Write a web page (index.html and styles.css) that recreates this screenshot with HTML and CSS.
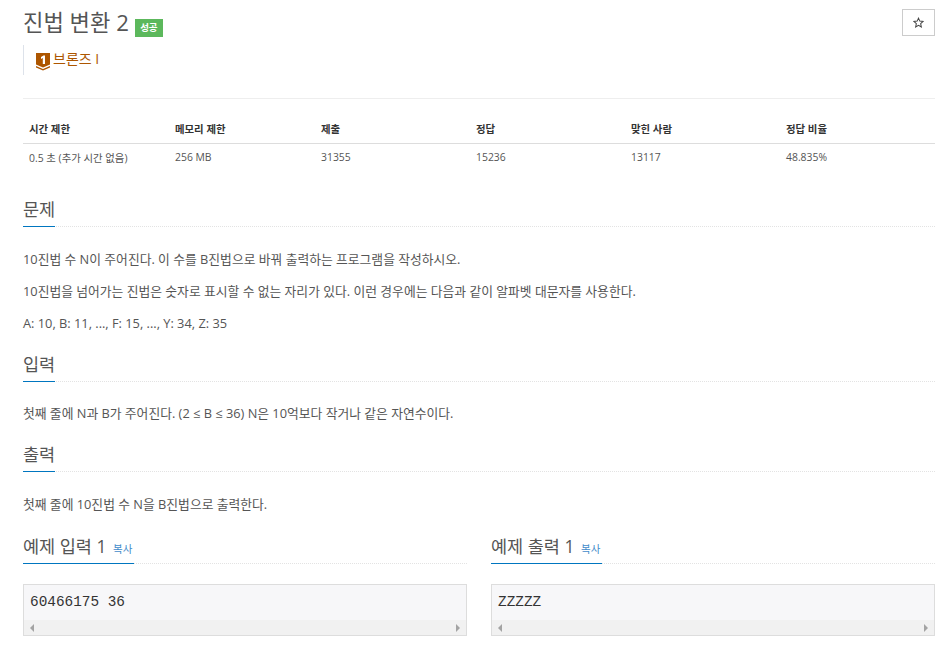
FILE: index.html
```html
<!DOCTYPE html>
<html lang="ko">

<head>
    <meta charset="UTF-8">
    <title>진법 변환 2</title>
    <link rel="stylesheet" href="styles.css">
</head>

<body>
    <div class="page-header">
        <div class="title-row">
            <h1 class="title">진법 변환 2</h1>
            <span class="label-success">성공</span>
        </div>
        <button class="star-btn">
            <svg width="11" height="11" viewBox="0 0 24 24"><path d="M12 2.500l2.900 6.500 7.100.8-5.300 4.800 1.500 7-6.200-3.600-6.200 3.600 1.500-7L2 9.800l7.100-.8z" fill="none" stroke="#444" stroke-width="2.200"/></svg>
        </button>
    </div>

    <div class="tier">
        <svg class="tier-icon" width="14" height="18" viewBox="0 0 14 18">
            <path d="M0 0h14v11.500l-7 3-7-3z" fill="#ad5600"/>
            <path d="M0 13l7 3 7-3v1.500l-7 3-7-3z" fill="#ad5600"/>
            <path d="M5 4l2.500-1.500H9V11H6.800V5L5 6z" fill="#fff"/>
        </svg>
        <span class="tier-name">브론즈 I</span>
    </div>

    <hr class="divider">

    <table class="info-table">
        <thead>
            <tr>
                <th>시간 제한</th>
                <th>메모리 제한</th>
                <th>제출</th>
                <th>정답</th>
                <th>맞힌 사람</th>
                <th>정답 비율</th>
            </tr>
        </thead>
        <tbody>
            <tr>
                <td>0.5 초 (추가 시간 없음)</td>
                <td>256 MB</td>
                <td>31355</td>
                <td>15236</td>
                <td>13117</td>
                <td>48.835%</td>
            </tr>
        </tbody>
    </table>

    <section class="section first">
        <div class="headline"><h2>문제</h2></div>
        <p>10진법 수 N이 주어진다. 이 수를 B진법으로 바꿔 출력하는 프로그램을 작성하시오.</p>
        <p>10진법을 넘어가는 진법은 숫자로 표시할 수 없는 자리가 있다. 이런 경우에는 다음과 같이 알파벳 대문자를 사용한다.</p>
        <p>A: 10, B: 11, ..., F: 15, ..., Y: 34, Z: 35</p>
    </section>

    <section class="section">
        <div class="headline"><h2>입력</h2></div>
        <p>첫째 줄에 N과 B가 주어진다. (2 ≤ B ≤ 36) N은 10억보다 작거나 같은 자연수이다.</p>
    </section>

    <section class="section">
        <div class="headline"><h2>출력</h2></div>
        <p>첫째 줄에 10진법 수 N을 B진법으로 출력한다.</p>
    </section>

    <div class="samples">
        <div class="sample">
            <div class="headline"><h2>예제 입력 1 <a class="copy">복사</a></h2></div>
            <div class="sample-box">
                <pre>60466175 36</pre>
                <div class="scrollbar"><span class="arrow-left"></span><span class="arrow-right"></span></div>
            </div>
        </div>
        <div class="sample">
            <div class="headline"><h2>예제 출력 1 <a class="copy">복사</a></h2></div>
            <div class="sample-box">
                <pre>ZZZZZ</pre>
                <div class="scrollbar"><span class="arrow-left"></span><span class="arrow-right"></span></div>
            </div>
        </div>
    </div>
</body>

</html>
```

FILE: styles.css
```css
* {
    margin: 0;
    padding: 0;
    box-sizing: border-box;
}

body {
    font-family: "Open Sans", "Noto Sans CJK KR", sans-serif;
    color: #555;
    background-color: #fff;
    padding: 0 15px 0 23px;
    overflow: hidden;
}

/* Title */
.page-header {
    display: flex;
    justify-content: space-between;
    padding-top: 9px;
    height: 45px;
}

.title-row {
    display: flex;
    align-items: flex-start;
    gap: 6px;
}

.title {
    font-size: 22.200px;
    font-weight: 400;
    line-height: 28px;
    color: #555;
}

.label-success {
    margin-top: 10px;
    background-color: #5cb85c;
    color: #fff;
    font-size: 9.500px;
    font-weight: 700;
    width: 28px;
    height: 18px;
    line-height: 18px;
    text-align: center;
}

.star-btn {
    width: 33px;
    height: 27px;
    background-color: #fff;
    border: 1px solid #ccc;
    display: flex;
    align-items: center;
    justify-content: center;
}

/* Tier */
.tier {
    height: 30px;
    border-left: 1px solid #dde2ea;
    padding: 8px 0 0 12px;
    display: flex;
    align-items: flex-start;
    gap: 3px;
}

.tier-name {
    color: #ad5600;
    font-size: 14px;
    line-height: 12px;
}

.divider {
    border: 0;
    border-top: 1px solid #eee;
    margin-top: 23px;
}

/* Info table */
.info-table {
    width: 100%;
    border-collapse: collapse;
    table-layout: fixed;
    margin-top: 16px;
    font-size: 10.400px;
}

.info-table th:nth-child(1),
.info-table th:nth-child(2) {
    width: 146px;
}

.info-table th {
    text-align: left;
    font-weight: 700;
    color: #333;
    height: 28px;
    padding: 0 6px;
    border-bottom: 1px solid #ddd;
}

.info-table td {
    height: 28px;
    padding: 0 6px;
    color: #555;
}

/* Sections */
.section {
    margin-top: 18.700px;
}

.section.first {
    margin-top: 25px;
}

.headline {
    border-bottom: 1px dotted #e3e3e3;
    height: 31px;
}

.headline h2 {
    display: inline-block;
    height: 31px;
    font-size: 17.500px;
    font-weight: 400;
    line-height: 26px;
    color: #555;
    border-bottom: 1px solid #0076c0;
}

.section p {
    font-size: 12.800px;
    line-height: 18px;
    margin-top: 14.400px;
    color: #555;
}

.section .headline + p {
    margin-top: 22.500px;
}

/* Samples */
.samples {
    display: grid;
    grid-template-columns: 1fr 1fr;
    gap: 24px;
    margin-top: 20.500px;
}

.copy {
    font-size: 10.500px;
    color: #428bca;
    margin: 0 2px;
}

.sample-box {
    margin-top: 20px;
    border: 1px solid #ddd;
    background-color: #f7f7f9;
    height: 52px;
    display: flex;
    flex-direction: column;
}

.sample-box pre {
    flex: 1;
    font-family: "Liberation Mono", monospace;
    font-size: 14.400px;
    line-height: 35px;
    padding-left: 6px;
    color: #333;
}

.scrollbar {
    height: 17px;
    background-color: #f1f1f1;
    display: flex;
    justify-content: space-between;
    align-items: center;
    padding: 0 6px;
}

.arrow-left {
    border-top: 4px solid transparent;
    border-bottom: 4px solid transparent;
    border-right: 4px solid #a3a3a3;
}

.arrow-right {
    border-top: 4px solid transparent;
    border-bottom: 4px solid transparent;
    border-left: 4px solid #a3a3a3;
}
```
